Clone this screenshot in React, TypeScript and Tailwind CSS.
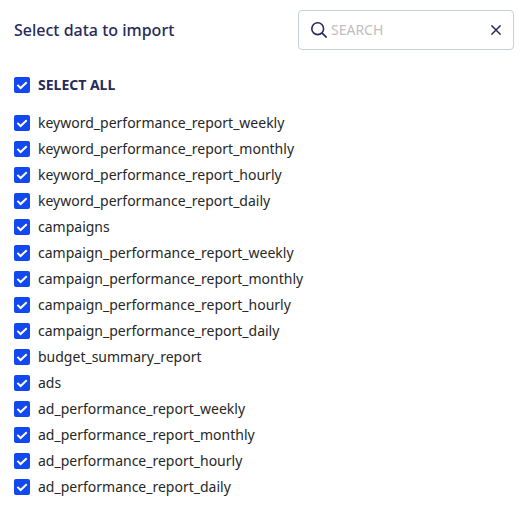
const items = [
  'keyword_performance_report_weekly',
  'keyword_performance_report_monthly',
  'keyword_performance_report_hourly',
  'keyword_performance_report_daily',
  'campaigns',
  'campaign_performance_report_weekly',
  'campaign_performance_report_monthly',
  'campaign_performance_report_hourly',
  'campaign_performance_report_daily',
  'budget_summary_report',
  'ads',
  'ad_performance_report_weekly',
  'ad_performance_report_monthly',
  'ad_performance_report_hourly',
  'ad_performance_report_daily',
];

function CheckBox() {
  return (
    <span className="flex size-4 shrink-0 items-center justify-center rounded-[2px] bg-[#1148f0]">
      <svg viewBox="0 0 16 16" className="size-4" fill="none" stroke="white" strokeWidth="2">
        <path d="M3.4 7.9 L6.6 11 L12.7 5.2" />
      </svg>
    </span>
  );
}

export default function App() {
  return (
    <div className="h-[512px] w-[523px] overflow-hidden bg-white pl-3.5 pr-[9px] pt-2.5 font-['Noto_Sans',sans-serif] text-[#272727]">
      <header className="flex h-10 items-center justify-between">
        <h1 className="text-base font-medium text-[#272a5b]">Select data to import</h1>
        <div className="flex h-10 w-[216px] items-center rounded border border-[#c6d1dc] px-3">
          <svg viewBox="0 0 16 16" className="size-4" fill="none" stroke="#272a5b" strokeWidth="1.6">
            <circle cx="6.7" cy="6.7" r="5.9" />
            <path d="M10.9 10.9 L15.6 15.6" />
          </svg>
          <span className="ml-1 flex-1 text-sm text-[#c0c0c0]">SEARCH</span>
          <svg viewBox="0 0 10 10" className="size-2.5" fill="none" stroke="#272a5b" strokeWidth="1.5">
            <path d="M0.4 0.4 L9.6 9.6 M9.6 0.4 L0.4 9.6" />
          </svg>
        </div>
      </header>
      <div className="mt-[22px] flex h-[26px] items-center gap-2 text-sm font-bold text-[#272a5b]">
        <CheckBox />
        SELECT ALL
      </div>
      <ul className="mt-3">
        {items.map((item) => (
          <li key={item} className="flex h-[26px] items-center gap-2 text-sm">
            <CheckBox />
            {item}
          </li>
        ))}
      </ul>
    </div>
  );
}
